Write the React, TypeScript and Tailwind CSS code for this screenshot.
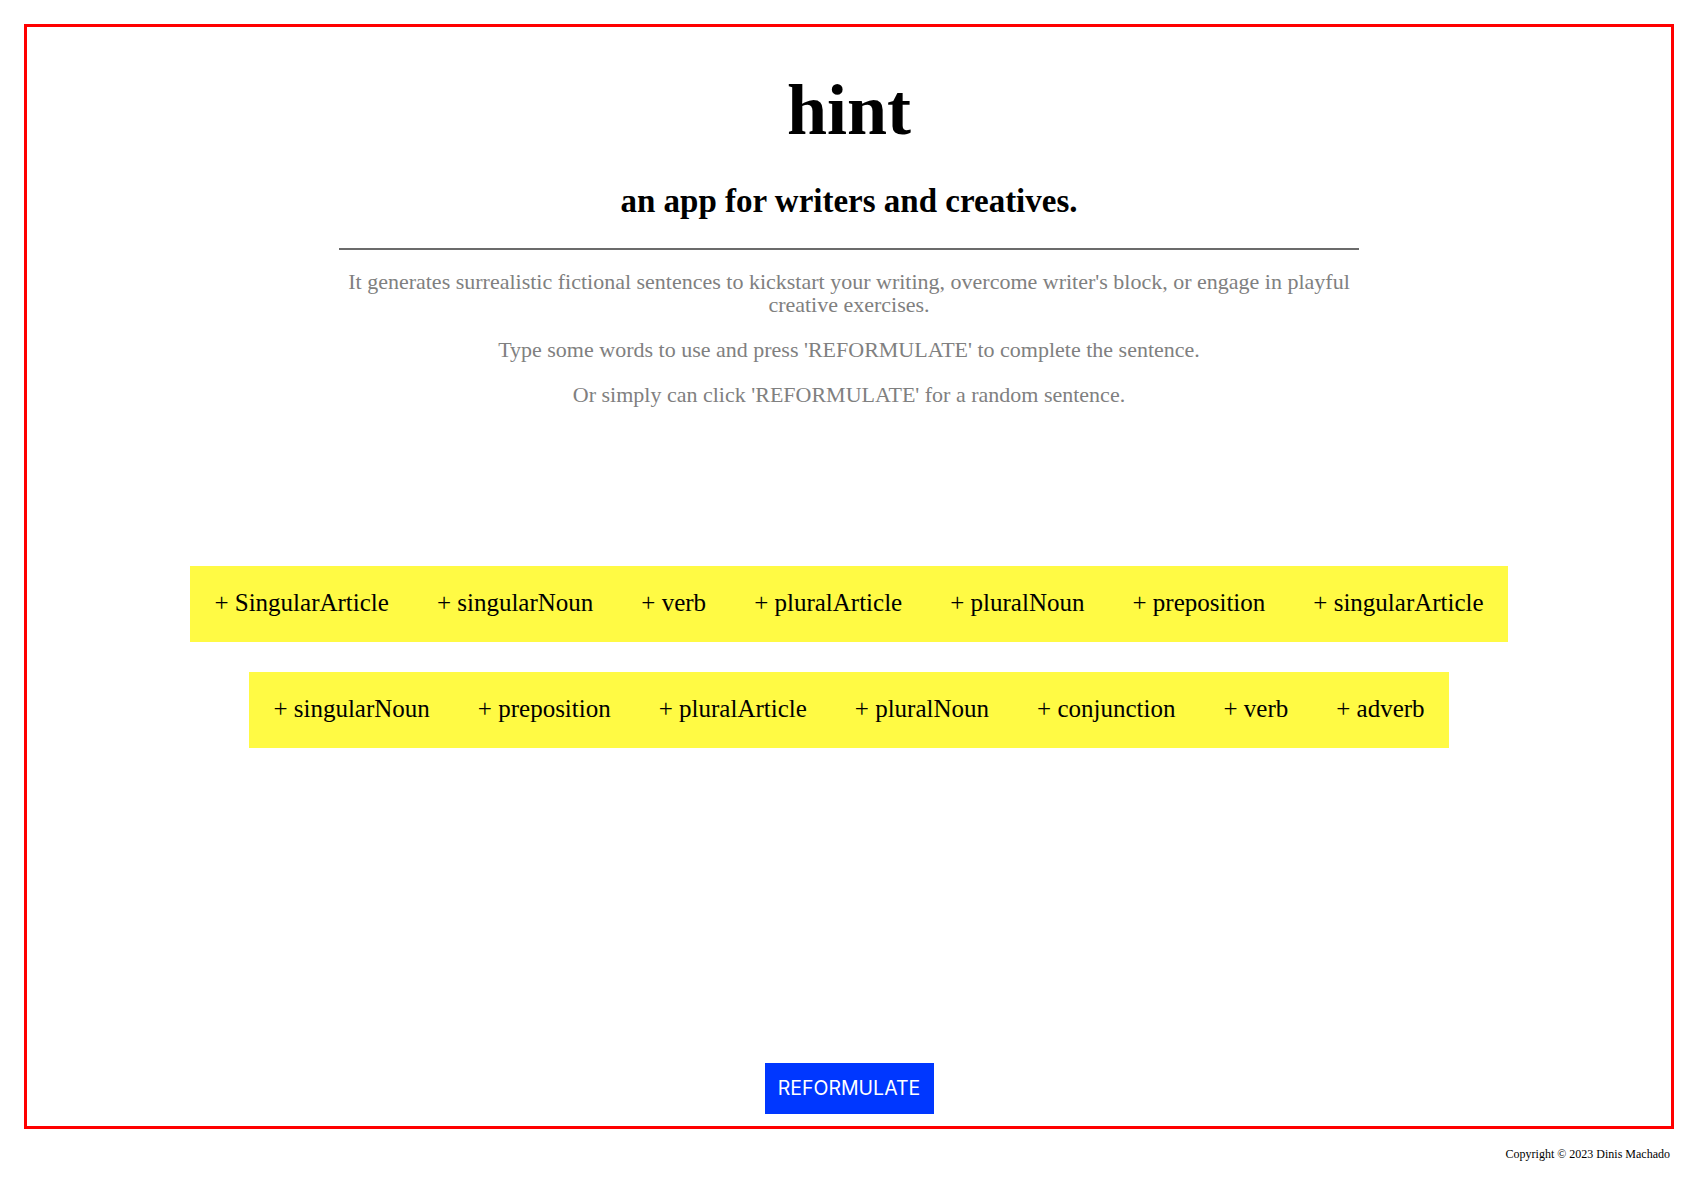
const rows: string[][] = [
  ["SingularArticle", "singularNoun", "verb", "pluralArticle", "pluralNoun", "preposition", "singularArticle"],
  ["singularNoun", "preposition", "pluralArticle", "pluralNoun", "conjunction", "verb", "adverb"],
];

function WordRow({ words }: { words: string[] }) {
  return (
    <div className="flex justify-center">
      <div className="flex h-[76px] items-center bg-[#fffa44]">
        {words.map((word, i) => (
          <button
            key={i}
            type="button"
            className="px-[24px] pb-[4px] text-[25px] leading-none text-black"
          >
            + {word}
          </button>
        ))}
      </div>
    </div>
  );
}

export default function App() {
  return (
    <div className="min-h-[1190px] bg-white font-['Liberation_Serif',serif] text-black">
      <main className="mx-6 mt-6 flex h-[1105px] flex-col items-center border-[3px] border-[#ff0000]">
        <h1 className="mt-[47px] text-[72px] font-bold leading-none">hint</h1>
        <h2 className="mt-[39px] text-[33px] font-bold leading-none">an app for writers and creatives.</h2>
        <div className="mt-[30px] h-[2px] w-[1020px] bg-[#6b6b6b]" />
        <div className="w-[1020px] text-center text-[22px] leading-[23px] text-[#808080]">
          <p className="mt-[20px]">
            It generates surrealistic fictional sentences to kickstart your writing, overcome writer's block, or engage
            in playful creative exercises.
          </p>
          <p className="mt-[22px]">Type some words to use and press 'REFORMULATE' to complete the sentence.</p>
          <p className="mt-[22px]">Or simply can click 'REFORMULATE' for a random sentence.</p>
        </div>

        <div className="mt-[160px] flex w-full flex-col gap-[30px]">
          {rows.map((words, i) => (
            <WordRow key={i} words={words} />
          ))}
        </div>

        <button
          type="button"
          className="mt-auto mb-[12px] flex h-[51px] w-[169px] items-center justify-center bg-[#0037ff] font-['Inter',sans-serif] text-[19.5px] text-white"
        >
          REFORMULATE
        </button>
      </main>
      <footer className="mt-[18px] pr-[28px] text-right text-[12px] leading-[14px]">
        Copyright © 2023 Dinis Machado
      </footer>
    </div>
  );
}
